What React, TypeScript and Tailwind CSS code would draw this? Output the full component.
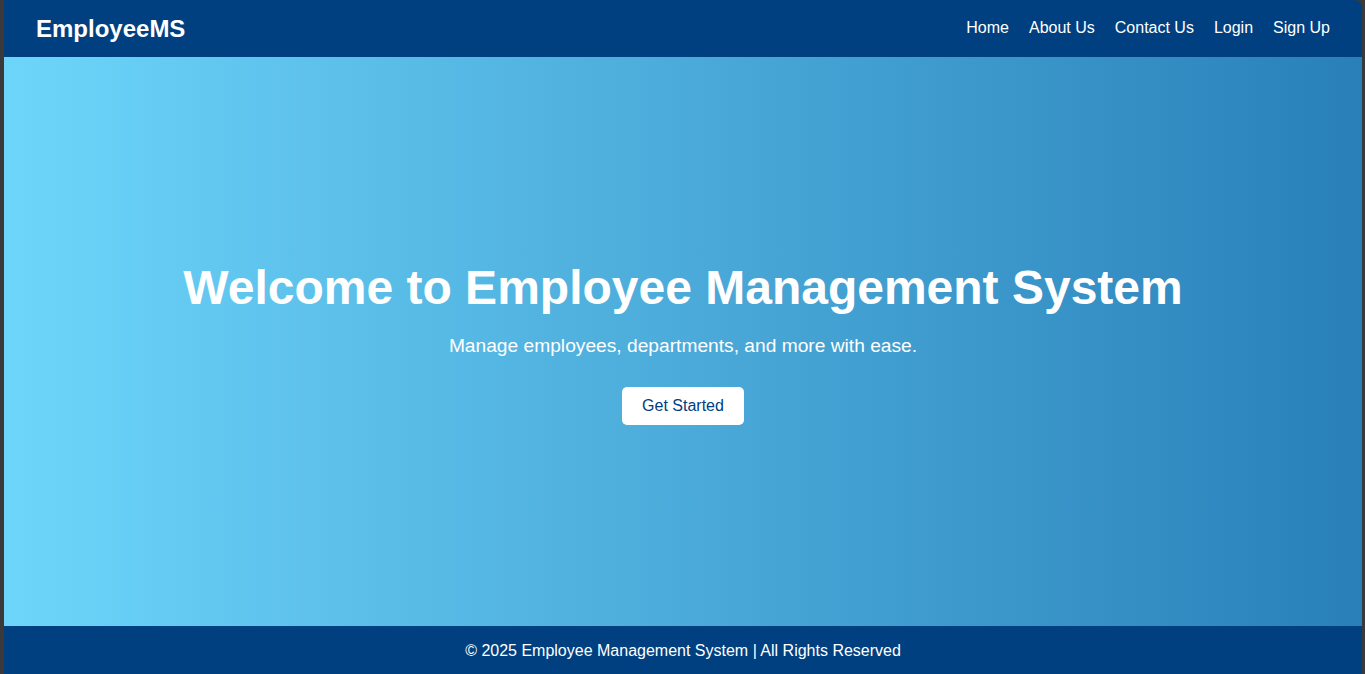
import React from "react";

export default function App() {
  return (
    <div className="h-[674px] w-[1365px] bg-[#3a3a3a] pl-[4px] pr-[3px] font-['Liberation_Sans',Arial,sans-serif]">
      <div className="flex h-full flex-col overflow-hidden rounded-tr-[8px]">
        <nav className="flex h-[57px] shrink-0 items-center justify-between bg-[#004080] px-[32px] text-white">
          <div className="text-[24px] font-bold leading-none">EmployeeMS</div>
          <ul className="flex items-center gap-[20px] pb-[2px] text-[16px]">
            <li>Home</li>
            <li>About Us</li>
            <li>Contact Us</li>
            <li>Login</li>
            <li>Sign Up</li>
          </ul>
        </nav>
        <main className="flex flex-1 flex-col items-center justify-center bg-[linear-gradient(to_right,#6dd5fa,#2980b9)] pt-[2px] text-center text-white">
          <h1 className="text-[48px] font-bold leading-[55px]">Welcome to Employee Management System</h1>
          <p className="mt-[20px] text-[19.2px] leading-[22px]">Manage employees, departments, and more with ease.</p>
          <button className="mt-[30px] h-[38px] rounded-[5px] bg-white px-[20px] text-[16px] text-[#004080]">Get Started</button>
        </main>
        <footer className="flex h-[48px] shrink-0 items-center justify-center bg-[#004080] pt-[2px] text-[16px] text-white">
          © 2025 Employee Management System | All Rights Reserved
        </footer>
      </div>
    </div>
  );
}
